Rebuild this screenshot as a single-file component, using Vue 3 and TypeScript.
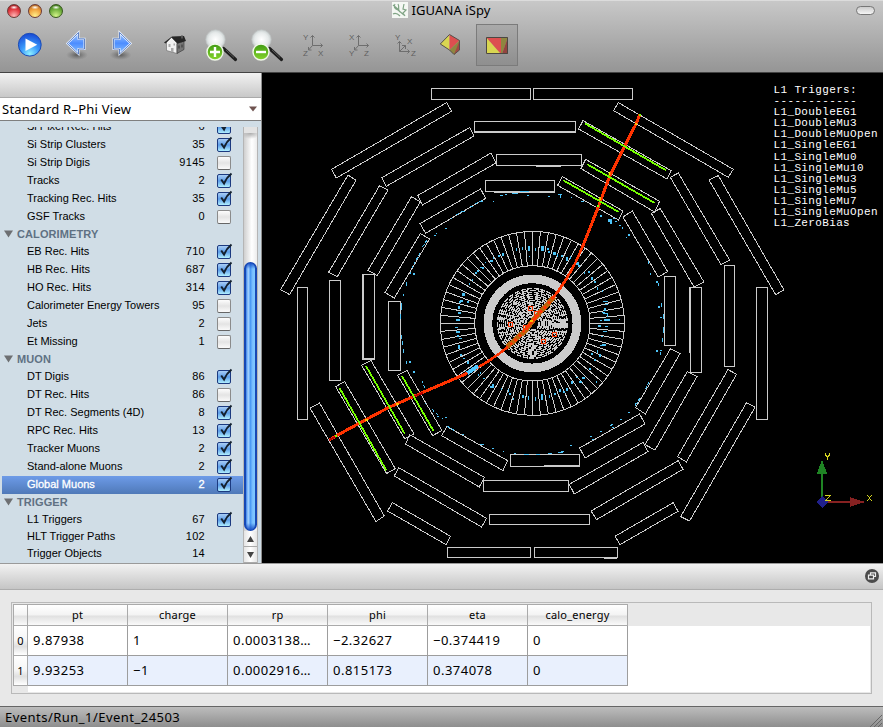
<script setup lang="ts">
interface Item { name: string; count: number; on?: boolean; noBox?: boolean; selected?: boolean }
interface Group { title?: string; items: Item[] }

const groups: Group[] = [
  { items: [
    { name: 'Si Pixel Rec. Hits', count: 6, on: true },
    { name: 'Si Strip Clusters', count: 35, on: true },
    { name: 'Si Strip Digis', count: 9145 },
    { name: 'Tracks', count: 2, on: true },
    { name: 'Tracking Rec. Hits', count: 35, on: true },
    { name: 'GSF Tracks', count: 0 },
  ] },
  { title: 'CALORIMETRY', items: [
    { name: 'EB Rec. Hits', count: 710, on: true },
    { name: 'HB Rec. Hits', count: 687, on: true },
    { name: 'HO Rec. Hits', count: 314, on: true },
    { name: 'Calorimeter Energy Towers', count: 95 },
    { name: 'Jets', count: 2 },
    { name: 'Et Missing', count: 1 },
  ] },
  { title: 'MUON', items: [
    { name: 'DT Digis', count: 86, on: true },
    { name: 'DT Rec. Hits', count: 86 },
    { name: 'DT Rec. Segments (4D)', count: 8, on: true },
    { name: 'RPC Rec. Hits', count: 13, on: true },
    { name: 'Tracker Muons', count: 2, on: true },
    { name: 'Stand-alone Muons', count: 2, on: true },
    { name: 'Global Muons', count: 2, on: true, selected: true },
  ] },
  { title: 'TRIGGER', items: [
    { name: 'L1 Triggers', count: 67, on: true },
    { name: 'HLT Trigger Paths', count: 102, noBox: true },
    { name: 'Trigger Objects', count: 14, noBox: true },
  ] },
]

const columns = ['pt', 'charge', 'rp', 'phi', 'eta', 'calo_energy']
const rows = [
  ['9.87938', '1', '0.0003138…', '−2.32627', '−0.374419', '0'],
  ['9.93253', '−1', '0.0002916…', '0.815173', '0.374078', '0'],
]

const triggers = ['L1_DoubleEG1', 'L1_DoubleMu3', 'L1_DoubleMuOpen', 'L1_SingleEG1', 'L1_SingleMu0', 'L1_SingleMu10',
  'L1_SingleMu3', 'L1_SingleMu5', 'L1_SingleMu7', 'L1_SingleMuOpen', 'L1_ZeroBias']
const triggerY = [115, 126, 137, 148, 160, 171, 182, 193, 204, 215, 226]

// Axis-aligned muon chambers: left, top, right, bottom
const boxes = [
  [431, 88, 530, 99], [533, 88, 632, 99], [474, 121, 575, 131], [474, 121, 575, 132], [496, 154, 581, 165],
  [485, 180, 554, 191], [297, 287, 307, 419], [329, 280, 340, 380], [362, 274, 374, 359], [363, 274, 374, 358],
  [388, 301, 400, 370], [664, 276, 675, 345], [690, 287, 701, 372], [724, 265, 734, 366], [756, 287, 767, 419],
  [510, 454, 579, 466], [483, 480, 568, 491], [489, 514, 589, 524], [447, 547, 530, 557], [534, 547, 617, 557],
]
// Rotated chambers
const chambers = [
  '331.3,169 446.3,102.3 451.3,111 336,177.7', '381.7,177.3 469.3,127.3 473.7,135.7 386,186',
  '417.3,195.3 490.7,152.7 495.7,162.7 422.3,204.7', '419.7,223.3 480.3,188.7 485.3,198 425.3,233',
  '347.7,174.7 355.7,180 289.3,294.3 280.3,289.3', '379.3,185.3 387.7,189.7 337,276.3 328.3,272',
  '411.3,196.3 420,201.7 377,275.3 367.7,270', '420,233.3 429.3,238.7 394,297.7 384.7,292.3',
  '618,102.3 733,169 728,177 613.3,110.3', '582.7,120.3 670.7,170.3 666.7,178.7 578.3,128.7',
  '585.3,159 659.3,201 654.3,211.7 580.7,168.3', '562,176.3 622.7,210.7 618.3,219.7 557.3,185',
  '708.7,179.7 718,175.3 783.7,289.7 775.3,294.3', '670,177 678,172.7 729.3,259.7 720.7,264.3',
  '651,213 660,208.3 703.7,281.7 693.7,286.7', '622.7,216.7 632,210.7 667.3,271.3 658,276.7',
  '309.7,407.7 319.3,402.7 384,515.7 375.7,521.3', '335.3,386.3 344.3,381.3 395,468.3 386.3,473.3',
  '361.3,365 370.7,360.3 413.7,433.7 404.3,438.3', '397.3,375 406.7,370.3 441.7,430.3 432.3,435.3',
  '446.7,426.3 507.3,460.3 502.7,470.3 441.3,435.3', '409.3,434.3 484,477 479,486.7 405.3,443.7',
  '398.3,467.3 486.3,518 481.3,526.7 394,475.7', '392,502.3 450.3,536 445.7,544.3 387.3,510.7',
  '670.3,348.3 679.7,353.3 645,413.7 635.3,407.3', '687,371.3 696.7,376.3 654.7,449.7 644.7,444.3',
  '727.7,369.3 736.3,374 686,461.7 677.3,456.3', '746.3,402.3 754.7,407 689.3,520.7 680.3,516.3',
  '639.3,413.7 644.7,423.7 584.7,457.7 579.3,447.7', '643,442 647.7,451.3 574,493.7 569,484',
  '678,460.3 682.7,469 596.3,519.3 590.7,510.7', '673,502.3 677.7,511 619.7,544.3 614.7,536',
]
const segments = [
  [584.7, 123.3, 666, 170.3], [587.3, 164.3, 654.7, 203], [563.3, 180.3, 618.7, 212],
  [339.7, 388.3, 386.3, 470.3], [366, 366, 404.7, 433.7], [402, 376, 433.7, 431.3],
]

const CX = 532.4
const CY = 323.4
const spokes = Array.from({ length: 72 }, (_, i) => {
  const a = (i * 5 * Math.PI) / 180
  const c = Math.cos(a), s = Math.sin(a)
  return `M${(CX + 57.6 * c).toFixed(1)} ${(CY + 57.6 * s).toFixed(1)}L${(CX + 92 * c).toFixed(1)} ${(CY + 92 * s).toFixed(1)}`
}).join('')

// Tracker layers: radius, dash, gap, line width
const layers = [
  [7, 6, 1, 2], [9.5, 6, 1.5, 2], [12, 6, 1, 2], [14.2, 6, 1.5, 1.6], [16.4, 7, 1.2, 2], [18.6, 6, 1.5, 1.3], [20.6, 6, 1.6, 1.8],
  [22.8, 6, 1.4, 1.5], [24.8, 5, 2, 1.4], [26.8, 6, 2, 1.5], [28.8, 6, 1.6, 1.4], [30.8, 5, 2, 1.4], [32.8, 6, 2, 1.4], [34.8, 5, 1.6, 1.4],
]
const siHits = [[530, 308], [510, 324], [525, 327], [554, 334], [543, 341], [536, 313]]

// Calorimeter hits: x, y, width, height
const hits = [
  [516, 248, 1, 3], [522, 247, 1, 3], [528, 246, 2, 5], [535, 248, 1, 3], [541, 246, 3, 5], [547, 248, 2, 2], [548, 251, 2, 2],
  [553, 252, 3, 3], [557, 254, 1, 3], [561, 255, 2, 2], [566, 257, 2, 4], [570, 256, 1, 3], [576, 262, 3, 3], [578, 265, 2, 2],
  [584, 272, 1, 2], [588, 271, 2, 2], [591, 277, 2, 3], [594, 281, 2, 2], [597, 287, 1, 3], [602, 290, 1, 2], [603, 301, 5, 1],
  [605, 304, 3, 1], [604, 308, 2, 3], [602, 312, 3, 1], [607, 313, 1, 4], [600, 320, 2, 1], [604, 319, 6, 2], [605, 326, 3, 1],
  [603, 313, 4, 1], [598, 325, 3, 2], [603, 331, 4, 1], [601, 336, 2, 1], [602, 344, 4, 2], [600, 345, 2, 1], [597, 350, 1, 3],
  [599, 354, 2, 3], [591, 353, 2, 2], [594, 359, 2, 2], [589, 368, 2, 2], [596, 381, 1, 2], [582, 377, 3, 2], [579, 381, 3, 2],
  [576, 377, 2, 1], [571, 381, 2, 3], [566, 388, 2, 3], [563, 391, 2, 2], [559, 389, 2, 3], [554, 393, 2, 2], [549, 395, 1, 3],
  [541, 394, 2, 6], [535, 397, 1, 4], [528, 396, 1, 4], [522, 395, 2, 3], [513, 398, 1, 2], [509, 393, 2, 2], [508, 389, 1, 3],
  [501, 388, 1, 2], [492, 384, 2, 4], [490, 386, 2, 2], [483, 378, 2, 1], [480, 372, 1, 2], [478, 374, 1, 2], [470, 367, 1, 1],
  [467, 361, 2, 3], [463, 358, 2, 1], [460, 354, 2, 2], [458, 345, 2, 4], [459, 338, 3, 1], [457, 335, 2, 2], [456, 331, 4, 2],
  [455, 327, 3, 1], [456, 319, 4, 2], [458, 312, 3, 2], [458, 306, 2, 3], [459, 301, 2, 2], [460, 300, 3, 2], [467, 301, 2, 2],
  [462, 293, 3, 3], [469, 283, 1, 2], [472, 279, 1, 2], [475, 272, 2, 2], [477, 270, 2, 2], [482, 267, 2, 2], [480, 267, 2, 1],
  [490, 260, 3, 2], [493, 257, 1, 2], [498, 255, 2, 2], [502, 253, 2, 3], [485, 262, 1, 1], [619, 319, 1, 1], [529, 256, 1, 1],
  [493, 201, 1, 1], [500, 195, 3, 1], [505, 194, 2, 1], [512, 193, 6, 1], [520, 191, 7, 1], [524, 191, 5, 1], [527, 195, 2, 1],
  [548, 196, 2, 1], [558, 194, 4, 1], [560, 195, 1, 3], [571, 197, 1, 1], [581, 201, 3, 1], [600, 215, 2, 2], [608, 219, 4, 3],
  [610, 222, 2, 2], [613, 218, 2, 1], [615, 221, 2, 1], [619, 225, 2, 1], [622, 227, 1, 2], [626, 237, 1, 1], [628, 234, 2, 2],
  [648, 261, 1, 3], [650, 273, 1, 2], [656, 281, 2, 2], [658, 283, 1, 3], [658, 306, 2, 2], [661, 303, 1, 4], [660, 317, 2, 1],
  [663, 314, 1, 5], [663, 327, 1, 6], [662, 338, 1, 4], [656, 350, 2, 2], [660, 350, 2, 1], [660, 352, 1, 3],
  [480, 201, 3, 1], [470, 206, 3, 1], [463, 211, 2, 1], [451, 218, 1, 1], [445, 228, 2, 1], [436, 233, 1, 1], [434, 235, 2, 1],
  [410, 272, 1, 2], [413, 273, 2, 2], [406, 282, 1, 4], [403, 294, 1, 2], [401, 303, 1, 7], [400, 314, 1, 5], [401, 335, 1, 4],
  [402, 341, 1, 4], [403, 349, 1, 4], [406, 361, 1, 3], [409, 361, 2, 2], [413, 371, 2, 2], [425, 403, 1, 1], [433, 411, 1, 1],
  [437, 416, 2, 1], [442, 418, 1, 1], [445, 417, 2, 1], [462, 434, 2, 1], [480, 444, 4, 1], [492, 448, 2, 1], [503, 451, 1, 1],
  [514, 453, 2, 1], [524, 454, 5, 1], [536, 454, 4, 1], [548, 453, 4, 1], [558, 452, 5, 1], [561, 451, 3, 1], [570, 445, 2, 1],
  [590, 436, 2, 1], [592, 439, 2, 1], [600, 431, 2, 1], [612, 427, 2, 1], [620, 419, 2, 1], [628, 412, 2, 1], [635, 403, 1, 3],
]
</script>

<template>
  <div class="window">
    <header class="chrome">
      <div class="titlebar">
        <div class="lights"><i class="red"></i><i class="amber"></i><i class="green"></i></div>
        <div class="title">
          <svg width="16" height="16" viewBox="0 0 16 16">
            <rect width="16" height="16" fill="#f4f7f3" />
            <path d="M1 3l6 5M3 2c-2 3 0 5 3 6l6 5M6 2c2 3-1 6 2 8M12 2l-1 5 3 1-3 3 2 3M1 12c3-2 5 0 7 2" fill="none" stroke="#7fa384" stroke-width="1.2" />
          </svg>
          <span>IGUANA iSpy</span>
        </div>
        <div class="pill"></div>
      </div>
      <nav class="toolbar">
        <svg class="tool" viewBox="7 22 46 50">
          <defs>
            <radialGradient id="ball" cx=".5" cy=".9" r=".85"><stop offset="0" stop-color="#8ff0ff" /><stop offset=".45" stop-color="#3d9dfb" /><stop offset="1" stop-color="#1a4fd8" /></radialGradient>
            <linearGradient id="arrow" x1="0" y1="0" x2="0" y2="1"><stop offset="0" stop-color="#a9cdff" /><stop offset=".5" stop-color="#4c8dff" /><stop offset="1" stop-color="#8cc4ff" /></linearGradient>
            <radialGradient id="lens"><stop offset="0" stop-color="#fff" /><stop offset=".7" stop-color="#e6eaea" /><stop offset="1" stop-color="#c9cfcf" /></radialGradient>
            <radialGradient id="shade"><stop offset="0" stop-color="#444" stop-opacity=".75" /><stop offset="1" stop-color="#666" stop-opacity="0" /></radialGradient>
            <linearGradient id="lime" x1="0" y1="0" x2="0" y2="1"><stop offset="0" stop-color="#3f9a12" /><stop offset="1" stop-color="#86d52d" /></linearGradient>
          </defs>
          <circle cx="29.8" cy="44.7" r="11.4" fill="url(#ball)" stroke="#1c4bb5" />
          <path d="M25.5 38.5v12.6l11.7-6.3z" fill="#fff" />
        </svg>
        <svg class="tool" viewBox="53 22 46 50">
          <ellipse cx="77" cy="55" rx="11" ry="5" fill="url(#shade)" />
          <path d="M67.3 43.5L78.5 32.5v6.3h6V49h-6v5z" fill="url(#arrow)" stroke="#e8f1ff" stroke-width="2" />
          <path d="M67.3 43.5L78.5 32.5v6.3h6V49h-6v5z" fill="none" stroke="#3f68b8" stroke-width=".8" />
        </svg>
        <svg class="tool" viewBox="99 22 46 50">
          <ellipse cx="120.500" cy="55" rx="11" ry="5" fill="url(#shade)" />
          <path d="M130.700 43.500L119.500 32.500v6.300h-6V49h6v5z" fill="url(#arrow)" stroke="#e8f1ff" stroke-width="2" />
          <path d="M130.700 43.500L119.500 32.500v6.300h-6V49h6v5z" fill="none" stroke="#3f68b8" stroke-width=".8" />
        </svg>
        <svg class="tool home" viewBox="152 22 46 50">
          <path d="M166.500 42l5-5 5.500 6v10.500l-10.500-3z" fill="#f2f2f2" stroke="#666" stroke-width=".6" />
          <path d="M177 43.500l7-2.500v8.500l-7 4z" fill="#777" stroke="#333" stroke-width=".6" />
          <path d="M164 42.500l8-6 12-.500 2 5-8.500 2.500-6-6-6 6z" fill="#262626" />
          <path d="M181 35.500h2v3h-2z" fill="#555" />
          <path d="M168.500 44h2v3h-2zM171 48h2.500v4H171zM173.500 43.500h1.500v2h-1.500z" fill="#aaa" />
          <path d="M179 45.500v3M182 44.500v3" stroke="#333" />
        </svg>
        <svg v-for="n in 2" :key="n" class="tool" viewBox="198 22 46 50">
          <path d="M223.500 48.500L235.500 59.500" stroke="#1e1e1e" stroke-width="3.200" stroke-linecap="round" />
          <path d="M226 50l8 7.500" stroke="#666" stroke-width=".8" />
          <circle cx="215.500" cy="39.500" r="9.700" fill="url(#lens)" stroke="#bfc3c3" stroke-width=".7" />
          <circle cx="215" cy="52" r="8" fill="url(#lime)" stroke="#f0f8e8" stroke-width="1.400" />
          <path :d="n === 1 ? 'M210 52h10M215 47v10' : 'M210 52h10'" stroke="#fff" stroke-width="2.400" />
        </svg>
        <svg v-for="(l, n) in [['Y', 'Z', 'X'], ['X', 'Y', 'Z']]" :key="'ax' + n" class="tool axes" viewBox="290 22 46 50">
          <path d="M312.500 35.500v10h10M310.500 37.500l2-2 2 2M320.500 43.500l2 2-2 2M312.500 45.500l-4 4.500M308.500 47v3h3" />
          <text x="303" y="40">{{ l[0] }}</text><text x="303" y="56">{{ l[1] }}</text><text x="318" y="56">{{ l[2] }}</text>
        </svg>
        <svg class="tool axes" viewBox="382 22 46 50">
          <path d="M399.500 41.500v10h10M397.500 43.500l2-2 2 2M407.500 49.500l2 2-2 2M399.500 51.500l6-6M402 45.500h3.500v3.500" />
          <text x="395" y="40">Y</text><text x="407" y="44">X</text><text x="411" y="56">Z</text>
        </svg>
        <svg class="tool" viewBox="428 22 46 50">
          <path d="M440.300 44l9.200-9.500V50z" fill="#d9d651" /><path d="M449.500 34.500l10 6L449.500 50z" fill="#dd4f50" />
          <path d="M459.500 40.500V50l-5.500 4.500-4.500-4.500z" fill="#8e8640" /><path d="M459.500 41v9l-5.500 4.500z" fill="#a34844" />
          <path d="M440.300 44l9.200-9.500 10 6V50l-5.500 4.500-4.500-4.500z" fill="none" stroke="#55504a" stroke-width="1" />
        </svg>
        <button class="picked">
          <svg width="22" height="17" viewBox="0 0 22 17">
            <path d="M0 0v17h15z" fill="#d9d651" /><path d="M0 0h15v17z" fill="#dd4f50" />
            <path d="M15 0h7L16 17h-1z" fill="#8e8640" /><path d="M22 0v17h-6z" fill="#94443f" />
            <path d="M.5.500h21v16H.500z" fill="none" stroke="#4c4742" />
          </svg>
        </button>
      </nav>
    </header>

    <main class="work">
      <aside class="side">
        <div class="dockbar"></div>
        <div class="combo"><span>Standard R–Phi View</span><svg width="8" height="6" viewBox="0 0 8 6"><path d="M0 .500h8L4 5.500z" fill="#6f5350" /></svg></div>
        <div class="listwrap">
          <div class="list">
            <template v-for="(g, gi) in groups" :key="gi">
              <div v-if="g.title" class="group">
                <svg width="9" height="8" viewBox="0 0 9 8"><path d="M0 .500h9L4.500 7.500z" fill="#6d6f72" /></svg>{{ g.title }}
              </div>
              <div v-for="it in g.items" :key="it.name" class="item" :class="{ sel: it.selected, short: it.noBox }">
                <span class="name">{{ it.name }}</span><span class="count">{{ it.count }}</span>
                <span class="slot">
                  <span v-if="!it.noBox" class="check" :class="{ on: it.on }">
                    <svg v-if="it.on" width="17" height="17" viewBox="0 0 17 17"><path d="M4.200 8.500L7 12.500Q9.500 6.500 14.500 2.500" fill="none" stroke="#14202e" stroke-width="2" /></svg>
                  </span>
                </span>
              </div>
            </template>
          </div>
          <div class="scroll">
            <div class="trackpart"></div>
            <div class="thumb"></div>
            <div class="arrowbtn"><svg width="7" height="6" viewBox="0 0 7 6"><path d="M0 6h7L3.500 0z" fill="#444" /></svg></div>
            <div class="arrowbtn"><svg width="7" height="6" viewBox="0 0 7 6"><path d="M0 0h7L3.500 6z" fill="#444" /></svg></div>
          </div>
        </div>
      </aside>

      <svg class="view" width="621" height="490" viewBox="262 73 621 490">
        <rect x="262" y="73" width="621" height="490" fill="#000" />
        <g class="wire">
          <rect v-for="(b, i) in boxes" :key="i" :x="b[0] + 0.5" :y="b[1] + 0.5" :width="b[2] - b[0]" :height="b[3] - b[1]" />
          <path d="M536 166.500h25M494 192.500h61M544 465.500h35M689.500 287v66M604 558.500h13" />
          <g transform="translate(.3 .3)"><polygon v-for="c in chambers" :key="c" :points="c" /></g>
          <circle :cx="CX" :cy="CY" r="92" />
          <circle :cx="CX" :cy="CY" r="57.600" />
          <path :d="spokes" />
          <circle :cx="CX" :cy="CY" r="44.500" stroke-width="8.600" />
          <circle v-for="l in layers" :key="l[0]" :cx="CX" :cy="CY" :r="l[0]" :stroke-dasharray="l[1] + ' ' + l[2]" :stroke-width="l[3]" />
        </g>
        <g class="hits"><rect v-for="(h, i) in hits" :key="i" :x="h[0]" :y="h[1]" :width="h[2]" :height="h[3]" /></g>
        <path class="wire cyan" d="M420 253l-8 15M427 240l-5 8M425 388l-3-7M432 409l6 6M447 426l8 5M640 398l-5 8M649 382l-4 8M475 204l8-4M456 215l7-4M613 424l-4 3" />
        <g class="tracks">
          <path class="brown" d="M507 347L526 330L534 319L554 297" />
          <path d="M640 114L636 124L623.700 148L609.700 176L598.700 206L582 248" stroke-width="3" />
          <path d="M582 248L575.300 263L567 278L558 291.500Q546 307 532.500 321Q520 337 507 347.500Q491 361 467 373.500" stroke-width="2.600" />
          <path d="M467 373.500L420.300 393.500L388.700 407.500L358.700 423.500L336 436L329.300 440" stroke-width="3" />
          <path d="M412 397l11-4M329 440l8-4" stroke="#b80000" stroke-width="2" />
          <path class="cyan" d="M467.500 373L478 366" stroke-width="4" />
          <path class="brown dots" d="M508 347L526 330M538 315L553 298" />
          <rect v-for="(s, i) in siHits" :key="i" :x="s[0] - 1.5" :y="s[1] - 1.5" width="4" height="4" stroke-width="1" />
        </g>
        <g class="seg">
          <line v-for="(s, i) in segments" :key="i" :x1="s[0]" :y1="s[1]" :x2="s[2]" :y2="s[3]" />
          <path d="M639 115h2M335 436h2M597 206h2" />
        </g>
        <path d="M636 123v2M609.500 172v3M600 197v3M365 420h3M396 404h3M530 321h3" stroke="#ffee00" stroke-width="1.500" />
        <g class="trig">
          <text x="773.500" y="93">L1 Triggers:</text>
          <text x="773.500" y="103.500">------------</text>
          <text v-for="(t, i) in triggers" :key="t" x="773.500" :y="triggerY[i]">{{ t }}</text>
        </g>
        <g shape-rendering="crispEdges">
          <path d="M821 470h2v30h-2z" fill="#1f8424" /><path d="M822 459.500l5 14h-10z" fill="#1f8424" />
          <path d="M824 501h40v2h-40z" fill="#862121" /><path d="M864 502l-14-5v10z" fill="#862121" />
          <path d="M822 496l6 6-6 6-6-6z" fill="#20208a" />
          <path class="letters" d="M825.500 453v2l2 2v3M829.500 453v2l-2 2M825 495.500h5l-4 5h4.500M867.500 495l4 6M871.500 495l-4 6" />
        </g>
      </svg>
    </main>

    <section class="dock">
      <div class="dockhead">
        <svg width="14" height="14" viewBox="0 0 14 14">
          <circle cx="7" cy="7" r="7" fill="#4b4b4b" />
          <path d="M5.500 6V3.800h5v3.700H9M3.500 6.200h5v3.600h-5z" fill="none" stroke="#eee" stroke-width="1.200" />
        </svg>
      </div>
      <div class="frame">
        <div class="grid">
          <div class="th corner"></div>
          <div v-for="c in columns" :key="c" class="th">{{ c }}</div>
          <div class="rest"></div>
          <template v-for="(r, i) in rows" :key="i">
            <div class="rh">{{ i }}</div>
            <div v-for="(v, j) in r" :key="j" class="td" :class="{ alt: i === 1 }">{{ v }}</div>
            <div></div>
          </template>
          <div class="foot"></div>
        </div>
      </div>
    </section>
    <footer class="status">
      <span>Events/Run_1/Event_24503</span>
      <svg width="14" height="14" viewBox="0 0 14 14"><path d="M2 14L14 2M6 14l8-8M10 14l4-4" stroke="#666" /></svg>
    </footer>
  </div>
</template>

<style>
body { margin: 0; overflow: hidden; }
</style>

<style scoped>
* { box-sizing: border-box; }
.window { width: 883px; height: 727px; display: flex; flex-direction: column; overflow: hidden; background: #e8e8e8; color: #000; font-family: "Lucida Grande", "Noto Sans", sans-serif; }
svg { display: block; flex: none; }
.chrome { height: 73px; flex: none; border-top: 1px solid #dcdcdc; border-bottom: 1px solid #434343; background: linear-gradient(#c8c8c8, #959595); }
.titlebar { height: 21px; display: grid; grid-template-columns: 200px 1fr 200px; align-items: center; }
.lights { display: flex; gap: 7px; padding: 0 0 1px 7px; }
.lights i { width: 14px; height: 14px; border-radius: 50%; border: 1px solid #6b3a36; }
.red { background: radial-gradient(ellipse 4px 2px at 50% 20%, #fff, transparent), radial-gradient(circle at 50% 90%, #ffb5b5, #e2383f 55%, #96161c); }
.amber { background: radial-gradient(ellipse 4px 2px at 50% 20%, #fff, transparent), radial-gradient(circle at 50% 90%, #fff08a, #f0a03c 55%, #a0571a); }
.lights .green { border-color: #38571f; background: radial-gradient(ellipse 4px 2px at 50% 20%, #fff, transparent), radial-gradient(circle at 50% 90%, #d4f58a, #6fae3c 55%, #356c17); }
.title { display: flex; justify-content: center; align-items: center; gap: 3px; font-size: 13px; line-height: 16px; letter-spacing: .1px; padding-bottom: 3px; }
.pill { justify-self: end; width: 19px; height: 9px; margin: 0 8px 2px 0; border: 1px solid #777; border-radius: 5px; background: linear-gradient(#ccc, #f5f5f5); }
.toolbar { height: 50px; display: flex; align-items: flex-start; padding-left: 7px; }
.tool { width: 46px; height: 50px; }
.home { margin-left: 7px; }
.axes path { fill: none; stroke: #6e6e6e; stroke-width: 1; }
.axes text { font: 8px "Liberation Sans", sans-serif; fill: #5f5f5f; }
.picked { width: 42px; height: 42px; margin: 2px 0 0 2px; padding: 0; display: flex; align-items: center; justify-content: center; border: 1px solid #7b7b7b; background: rgba(0, 0, 0, .07); }
.work { height: 490px; flex: none; display: flex; }
.side { width: 262px; display: flex; flex-direction: column; background: #d0dde6; border-right: 1px solid #8e8e8e; }
.dockbar { height: 25px; flex: none; border-bottom: 1px solid #aaa; background: linear-gradient(#f2f2f2, #c8c8c8); }
.combo { height: 23px; flex: none; padding: 0 4px 1px 2px; display: flex; align-items: center; justify-content: space-between; background: #fff; border-bottom: 1px solid #7f7f7f; font-size: 13px; line-height: 18px; letter-spacing: .24px; }
.listwrap { height: 436px; margin-top: 6px; display: flex; overflow: hidden; }
.list { width: 243px; margin-top: -9px; padding-left: 2px; font: 11px "Liberation Sans", sans-serif; }
.item { height: 18px; display: flex; align-items: center; padding-left: 25px; }
.item.short { height: 17px; }
.sel { color: #fff; background: linear-gradient(#6d9be8, #4f79b8); -webkit-text-stroke: .3px #fff; }
.name { flex: 1; letter-spacing: 0; padding-bottom: 3px; }
.count { padding-bottom: 3px; letter-spacing: .3px; }
.slot { width: 38px; padding-left: 12px; }
.check { display: block; width: 14px; height: 14px; border: 1px solid #8b8b8b; border-bottom-color: #666; border-radius: 2px; background: linear-gradient(#fdfdfd, #e4e4e4 50%, #fafafa); }
.check.on { border-color: #1c3a80; background: linear-gradient(#a9cdf5, #5c9de9 50%, #b0efff); }
.check svg { margin: -4px 0 0 -1px; }
.group { height: 17px; padding: 0 0 2px 2px; display: flex; align-items: center; gap: 4px; font-weight: bold; color: #5f7183; letter-spacing: .1px; }
.scroll { width: 15px; display: flex; flex-direction: column; border: solid #b5b5b5; border-width: 0 1px; background: linear-gradient(90deg, #cfcfcf, #fff 60%, #ececec); }
.trackpart { height: 135px; flex: none; border-top: 6px solid #e3e3e3; background: radial-gradient(ellipse 10px 6px at 50% 0, #aaa, transparent); }
.thumb { height: 269px; flex: none; border: 1px solid #1748b4; border-width: 1px 2px; border-radius: 7px; background: linear-gradient(#1b51c6, transparent 6px, transparent 260px, #1b51c6), linear-gradient(90deg, #3b83e9, #a6d3ff 25%, #4b9bf5 50%, #7cc2ff 75%, #7cc9ff); }
.arrowbtn { height: 16px; display: flex; align-items: center; justify-content: center; border-bottom: 1px solid #aaa; background: linear-gradient(90deg, #e4e4e4, #fff, #e4e4e4); }
.wire { fill: none; stroke: #cbcbcb; stroke-width: 1; shape-rendering: crispEdges; }
.wire.cyan { stroke: #4dc4f8; stroke-dasharray: 3 2; }
.hits { fill: #4dc4f8; }
.tracks { fill: none; stroke: #ff3300; shape-rendering: crispEdges; }
.tracks .cyan { stroke: #4dc8ff; }
.tracks .brown { stroke: #b9640b; stroke-width: 5; }
.tracks .dots { stroke-width: 3.500; stroke-dasharray: 3 3; }
.seg { stroke: #76ff00; stroke-width: 1.800; shape-rendering: crispEdges; }
.trig text { font: 11px "Liberation Mono", monospace; letter-spacing: .36px; fill: #fff; }
.letters { fill: none; stroke: #d6d620; }
.dock { height: 143px; flex: none; border-top: 1px solid #9a9a9a; }
.dockhead { height: 26px; display: flex; align-items: center; justify-content: flex-end; padding: 0 4px 1px 0; background: linear-gradient(#f2f2f2, #c5c5c5); border-bottom: 1px solid #adadad; }
.frame { width: 861px; height: 92px; margin: 12px 0 0 11px; padding: 1px; border: 1px solid #b9b9b9; }
.grid { height: 88px; display: grid; grid-template-columns: 15px repeat(6, 100px) 1fr; grid-template-rows: 22px 30px 30px 6px; background: #fff; font-size: 13px; }
.th { display: flex; align-items: center; justify-content: center; padding-bottom: 2px; border: solid #aaa; border-width: 1px 1px 1px 0; font-size: 11px; background: linear-gradient(#fff, #f3f3f3 50%, #e0e0e0 55%, #fafafa); letter-spacing: .2px; }
.corner, .rh { border-left: 1px solid #aaa; }
.rest { background: #e8e8e8; }
.rh { display: flex; align-items: center; justify-content: center; border-right: 1px solid #aaa; border-bottom: 1px solid #aaa; font-size: 11px; background: linear-gradient(#fff, #f5f5f5 50%, #e0e0e0 70%, #fff); }
.td { display: flex; align-items: center; padding: 0 0 2px 5px; border-right: 1px solid #9d9d9d; border-bottom: 1px solid #9d9d9d; letter-spacing: .48px; white-space: nowrap; }
.alt { background: #e9f0fd; }
.foot { background: #e8e8e8; }
.status { height: 21px; flex: none; display: flex; align-items: center; justify-content: space-between; padding: 0 1px 0 5px; border-top: 1px solid #666; background: linear-gradient(#bdbdbd, #8e8e8e); font-size: 13px; letter-spacing: .47px; }
.status svg { align-self: flex-end; }
</style>
